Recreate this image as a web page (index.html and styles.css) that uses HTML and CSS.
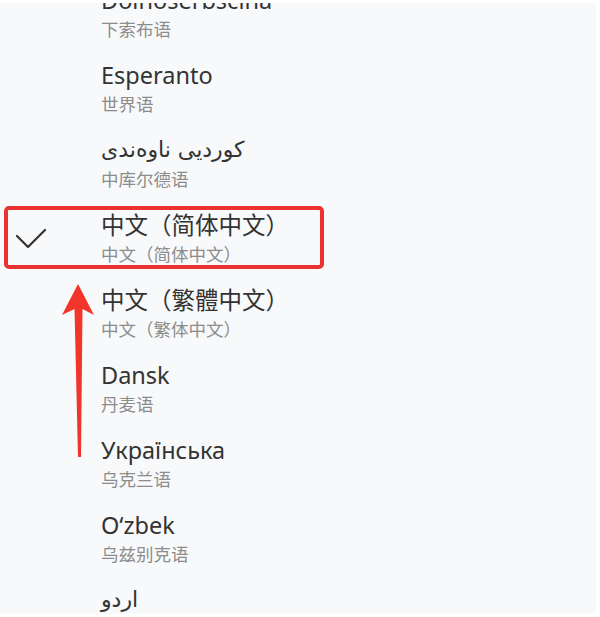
FILE: index.html
```html
<!DOCTYPE html>
<html lang="zh">
<head>
<meta charset="utf-8">
<link rel="stylesheet" href="styles.css">
</head>
<body>
<div class="screen">
  <ul class="list">
    <li class="row"><div class="check"></div><div class="texts"><div class="title">Dolnoserbšćina</div><div class="sub">下索布语</div></div></li>
    <li class="row"><div class="check"></div><div class="texts"><div class="title">Esperanto</div><div class="sub">世界语</div></div></li>
    <li class="row"><div class="check"></div><div class="texts"><div class="title" dir="rtl">کوردیی ناوەندی</div><div class="sub">中库尔德语</div></div></li>
    <li class="row selected"><div class="check"><svg width="34" height="34" viewBox="0 0 34 34"><path d="M1 11 L12 22 L29 5" fill="none" stroke="#333" stroke-width="2.2" stroke-linecap="round" stroke-linejoin="round"/></svg></div><div class="texts"><div class="title">中文（简体中文）</div><div class="sub">中文（简体中文）</div></div><div class="highlight"></div></li>
    <li class="row"><div class="check"></div><div class="texts"><div class="title">中文（繁體中文）</div><div class="sub">中文（繁体中文）</div></div></li>
    <li class="row"><div class="check"></div><div class="texts"><div class="title">Dansk</div><div class="sub">丹麦语</div></div></li>
    <li class="row"><div class="check"></div><div class="texts"><div class="title">Українська</div><div class="sub">乌克兰语</div></div></li>
    <li class="row"><div class="check"></div><div class="texts"><div class="title">O‘zbek</div><div class="sub">乌兹别克语</div></div></li>
    <li class="row"><div class="check"></div><div class="texts"><div class="title" dir="rtl">اردو</div></div></li>
  </ul>
  <svg class="arrow" width="600" height="617" viewBox="0 0 600 617"><path d="M78 284 L94 315 L82.5 309 L81 457 L78 457 L74.5 309 L62 315 Z" fill="#f2352b"/></svg>
</div>
</body>
</html>
```
FILE: styles.css
```css
html, body {
  margin: 0;
  padding: 0;
  background: #ffffff;
}
.screen {
  position: relative;
  width: 596px;
  height: 611px;
  margin-top: 3px;
  background: #f8f9fa;
  overflow: hidden;
  font-family: "Noto Sans", "Noto Sans CJK SC", "DejaVu Sans", sans-serif;
}
.list {
  list-style: none;
  margin: -28px 0 0 0;
  padding: 0;
}
.row {
  position: relative;
  height: 75px;
  display: flex;
  align-items: flex-start;
  box-sizing: border-box;
  padding-top: 10px;
}
.check {
  width: 101px;
  flex: none;
  display: flex;
  justify-content: flex-start;
  padding-left: 16px;
  box-sizing: border-box;
  padding-top: 15px;
}
.texts {
  display: flex;
  flex-direction: column;
  align-items: flex-start;
}
.title {
  font-size: 23.5px;
  line-height: 30px;
  color: #333333;
}
.title[dir="rtl"] {
  font-family: "DejaVu Sans", "Noto Sans", sans-serif;
  font-size: 22px;
}
.sub {
  margin-top: 2px;
  font-size: 17.5px;
  line-height: 24px;
  color: #8c8c8c;
  font-family: "Noto Sans CJK SC", sans-serif;
}
.highlight {
  position: absolute;
  left: 4px;
  top: 6px;
  width: 312px;
  height: 55px;
  border: 4.5px solid #e8332f;
  border-radius: 5px;
}
.arrow {
  position: absolute;
  left: 0;
  top: -3px;
  pointer-events: none;
}
```
